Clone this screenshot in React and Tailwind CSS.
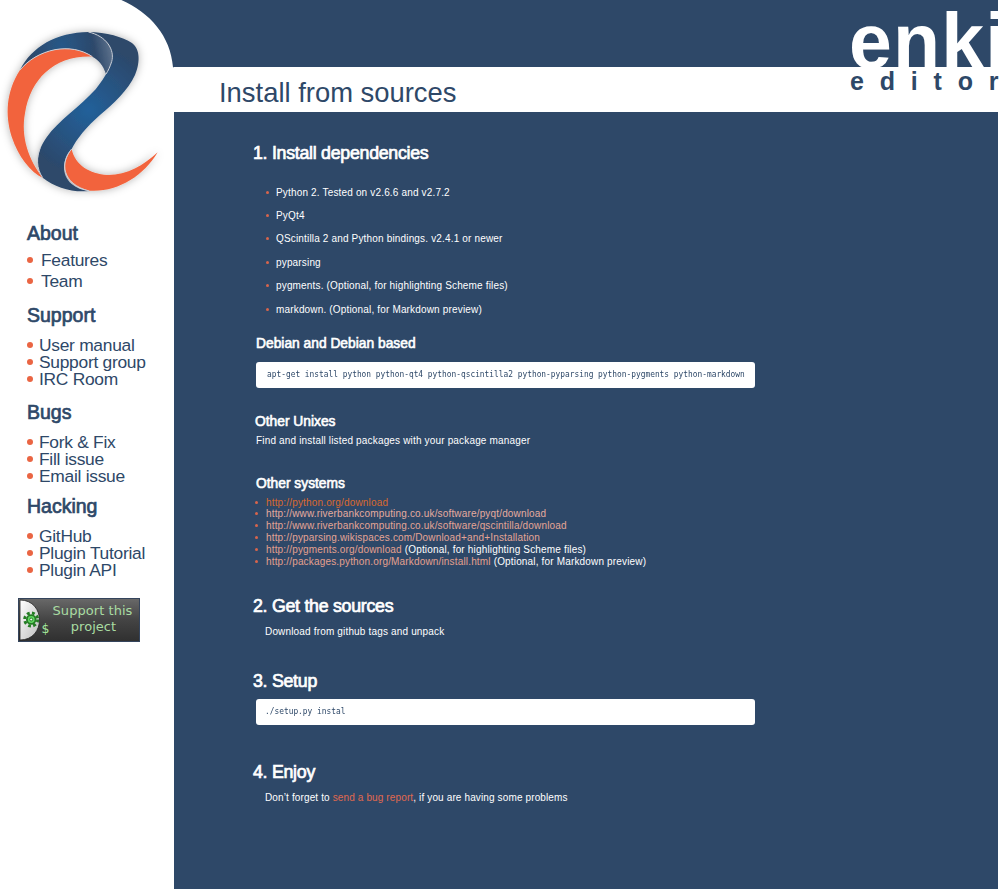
import React from "react";

const MENU = [
  { title: "About", head: "mt-[10px]", items: [["Features", "mt-[7px] gap-[8px]"], ["Team", "mt-[4px] gap-[8px]"]] },
  { title: "Support", head: "mt-[15px]", items: [["User manual", "mt-[10px] gap-[6px]"], ["Support group", "gap-[6px]"], ["IRC Room", "gap-[6px]"]] },
  { title: "Bugs", head: "mt-[14px]", items: [["Fork & Fix", "mt-[10px] gap-[6px]"], ["Fill issue", "gap-[6px]"], ["Email issue", "gap-[6px]"]] },
  { title: "Hacking", head: "mt-[11px]", items: [["GitHub", "mt-[10px] gap-[6px]"], ["Plugin Tutorial", "gap-[6px]"], ["Plugin API", "gap-[6px]"]] },
];

const DEPENDENCIES = [
  ["Python 2. Tested on v2.6.6 and v2.7.2", "mt-[24px]"],
  ["PyQt4", "mt-[12px]"],
  ["QScintilla 2 and Python bindings. v2.4.1 or newer", "mt-[12px]"],
  ["pyparsing", "mt-[13px]"],
  ["pygments. (Optional, for highlighting Scheme files)", "mt-[12px]"],
  ["markdown. (Optional, for Markdown preview)", "mt-[13px]"],
];

const LINKS = [
  ["http://python.org/download", "", "text-[#d9682f]", "mt-[6px]"],
  ["http://www.riverbankcomputing.co.uk/software/pyqt/download", "", "text-[#e5ab9f]", ""],
  ["http://www.riverbankcomputing.co.uk/software/qscintilla/download", "", "text-[#e5a595]", "mt-px"],
  ["http://pyparsing.wikispaces.com/Download+and+Installation", "", "text-[#e5a595]", "mt-px"],
  ["http://pygments.org/download", " (Optional, for highlighting Scheme files)", "text-[#e5a08e]", "mt-px"],
  ["http://packages.python.org/Markdown/install.html", " (Optional, for Markdown preview)", "text-[#e5a08e]", "mt-px"],
];

function Logo() {
  return (
    <svg className="block h-[212px] w-[174px]" viewBox="0 0 522 636">
      <defs>
        <radialGradient id="ribbon" gradientUnits="userSpaceOnUse" cx="265" cy="330" r="200">
          <stop offset="0" stopColor="#22609a" />
          <stop offset="1" stopColor="#2d486a" />
        </radialGradient>
        <radialGradient id="back" gradientUnits="userSpaceOnUse" cx="185" cy="135" r="100">
          <stop offset="0" stopColor="#275888" />
          <stop offset="1" stopColor="#2d486a" />
        </radialGradient>
        <linearGradient id="fold" gradientUnits="userSpaceOnUse" x1="285" y1="160" x2="338" y2="150">
          <stop offset="0" stopColor="#8191a6" stopOpacity="0" />
          <stop offset="1" stopColor="#8191a6" stopOpacity="0.6" />
        </linearGradient>
        <filter id="shade" x="-20%" y="-20%" width="140%" height="140%">
          <feDropShadow dx="0" dy="0" stdDeviation="12" floodColor="#000" floodOpacity="0.3" />
        </filter>
      </defs>
      <path d="M364 0 C450 38 512 108 519 202 H522 V0Z" fill="#2e4868" />
      <g filter="url(#shade)">
        <path d="M60 210 C95 140 170 97 265 96 C315 100 345 150 336 190 C331 205 325 215 318 222 C310 195 295 180 277 170 C245 148 205 142 165 149 C120 158 85 180 60 210Z" fill="url(#back)" />
        <path d="M265 96 C315 100 345 150 336 190 C331 205 325 215 318 222 C310 195 295 180 277 170Z" fill="url(#fold)" />
        <path d="M279 170 C245 148 205 142 165 149 C120 158 85 180 60 210 C18 275 15 345 35 410 C55 470 90 515 130 535 C85 480 62 410 75 340 C92 235 165 165 279 170Z" fill="#f2643c" />
        <path d="M265 96 C320 96 368 111 396 129 C424 150 418 195 405 225 C385 270 340 312 300 345 C260 380 230 417 215 447 C185 480 184 525 215 552 C230 565 250 572 268 573 C215 578 165 562 128 533 C103 500 112 450 140 412 C175 362 240 320 287 268 C305 245 323 220 333 190 C345 150 320 108 265 96Z" fill="url(#ribbon)" />
        <path d="M215 447 C225 495 270 522 322 525 C380 526 430 497 473 457 C430 530 350 578 268 572 C215 562 180 520 200 475 C205 462 210 455 215 447Z" fill="#f2643c" />
      </g>
      <g fill="none" stroke="#ccd0d8" strokeWidth="3">
        <path d="M60 210 C85 180 120 158 165 149 C205 142 245 148 277 170" />
        <path d="M265 96 C320 108 345 150 335 185 C330 200 325 212 318 222" />
        <path d="M215 447 C180 485 184 552 268 573" />
        <path d="M128 533 C108 505 110 470 120 445" />
      </g>
    </svg>
  );
}

function Donate() {
  return (
    <div className="ml-[18px] mt-[20px] flex h-[44px] w-[122px] border border-[#34445c] bg-linear-to-b from-[#686868] via-[#444] to-[#303030]">
      <svg className="h-[42px] w-[31px] shrink-0" viewBox="0 0 31 42">
        <defs>
          <linearGradient id="disc" x1="0" y1="0" x2="1" y2="1">
            <stop offset="0" stopColor="#fff" />
            <stop offset="1" stopColor="#bcbcbc" />
          </linearGradient>
        </defs>
        <path d="M1 1 C27 1 27 41 1 41Z" fill="url(#disc)" stroke="#252525" strokeWidth="0.8" />
        <circle cx="12.2" cy="20.5" r="6.5" fill="none" stroke="#247c24" strokeWidth="3" strokeDasharray="2.8 2.305" />
        <circle cx="12.2" cy="20.5" r="4.3" fill="#62d862" stroke="#247c24" strokeWidth="1.8" />
        <circle cx="12.2" cy="20.5" r="1.5" fill="#e8ffe8" stroke="#247c24" />
        <text x="22.5" y="34" fill="#a4e89d" fontFamily="DejaVu Sans" fontSize="12.5">$</text>
      </svg>
      <div className="flex flex-1 flex-col items-center pr-[4px] pt-[4px] font-['DejaVu_Sans',sans-serif] text-[13px] leading-[15.5px] tracking-[0.05px] text-[#a9dca2]">
        <span className="whitespace-nowrap">Support this</span>
        <span className="whitespace-nowrap pl-[2px]">project</span>
      </div>
    </div>
  );
}

function Dot({ className = "" }) {
  return <i className={`block size-[3px] shrink-0 rounded-full bg-[#d8654c] ${className}`} />;
}

function Step({ className, children }) {
  return <h2 className={`text-[17.8px] leading-[20px] tracking-[-0.28px] [-webkit-text-stroke:0.7px_white] ${className}`}>{children}</h2>;
}

function Sub({ className, children }) {
  return <h3 className={`text-[13.8px] leading-[15px] tracking-normal [-webkit-text-stroke:0.6px_white] ${className}`}>{children}</h3>;
}

function Code({ className, children }) {
  return (
    <pre className={`ml-[82px] h-[26px] w-[499px] rounded-[3px] bg-white font-['DejaVu_Sans_Mono',monospace] text-[9px] tracking-normal text-[#2e4868] ${className}`}>
      <code className="inline-block origin-left scale-x-[0.873] font-[inherit]">{children}</code>
    </pre>
  );
}

export default function App() {
  return (
    <div className="flex h-[889px] w-[1000px] overflow-hidden bg-white font-['Liberation_Sans',Arial,sans-serif] text-[#2e4868]">
      <aside className="w-[174px] shrink-0">
        <Logo />
        <nav>
          {MENU.map((group) => (
            <section key={group.title}>
              <h2 className={`pl-[27px] text-[19.5px] leading-[22px] [-webkit-text-stroke:0.7px_#2e4868] ${group.head}`}>{group.title}</h2>
              <ul>
                {group.items.map(([label, place]) => (
                  <li key={label} className={`flex h-[17px] items-center whitespace-nowrap pl-[27px] text-[17.4px] leading-[17px] tracking-[-0.28px] ${place}`}>
                    <i className="block size-[6px] shrink-0 rounded-full bg-[#ea6543]" />
                    <span className="mt-[2px]">{label}</span>
                  </li>
                ))}
              </ul>
            </section>
          ))}
        </nav>
        <Donate />
      </aside>

      <div className="flex flex-1 flex-col">
        <header className="relative shrink-0">
          <div className="mr-[2px] h-[67px] bg-[#2e4868]" />
          <h1 className="h-[45px] pl-[45px] text-[27.4px] leading-[51px]">Install from sources</h1>
          <div className="absolute left-[675px] top-0 h-[112px] w-[151px] overflow-hidden whitespace-nowrap pt-[1px] font-bold">
            <div className="h-[68px] text-[77px] leading-[80px] tracking-[1.2px] text-white">enki</div>
            <div className="ml-[1px] text-[25px] leading-[24px] tracking-[15.8px]">editor</div>
          </div>
        </header>

        <main className="mr-[2px] flex-1 bg-[#2e4868] text-[10px] leading-[11px] tracking-[0.165px] text-white">
          <Step className="ml-[79px] pt-[31px]">1. Install dependencies</Step>
          <ul>
            {DEPENDENCIES.map(([text, place]) => (
              <li key={text} className={`flex items-center gap-[7.5px] pl-[91.5px] ${place}`}>
                <Dot />
                {text}
              </li>
            ))}
          </ul>
          <Sub className="ml-[82px] mt-[21px]">Debian and Debian based</Sub>
          <Code className="mt-[11px] pl-[11px] leading-[24px]">
            apt-get install python python-qt4 python-qscintilla2 python-pyparsing python-pygments python-markdown
          </Code>
          <Sub className="ml-[81px] mt-[26px]">Other Unixes</Sub>
          <p className="ml-[82px] mt-[6px]">Find and install listed packages with your package manager</p>
          <Sub className="ml-[82px] mt-[30px]">Other systems</Sub>
          <ul>
            {LINKS.map(([url, note, color, place]) => (
              <li key={url} className={`flex items-center gap-[8px] pl-[81px] ${place}`}>
                <Dot />
                <span>
                  <a className={color}>{url}</a>
                  {note}
                </span>
              </li>
            ))}
          </ul>
          <Step className="ml-[79px] mt-[29px]">2. Get the sources</Step>
          <p className="ml-[91px] mt-[10px]">Download from github tags and unpack</p>
          <Step className="ml-[79px] mt-[34px]">3. Setup</Step>
          <Code className="mt-[7.5px] pl-[9px] leading-[25px]">./setup.py instal</Code>
          <Step className="ml-[79px] mt-[37.5px]">4. Enjoy</Step>
          <p className="ml-[91px] mt-[10px] tracking-[0.13px]">
            Don’t forget to <a className="text-[#e0694f]">send a bug report</a>, if you are having some problems
          </p>
        </main>
      </div>
    </div>
  );
}
